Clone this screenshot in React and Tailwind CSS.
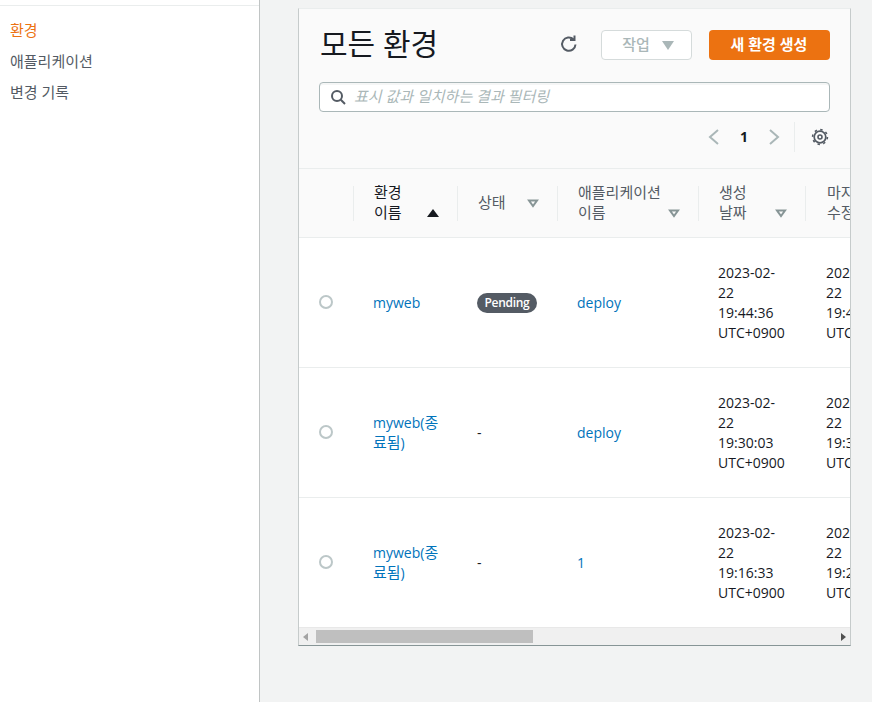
const FONT = "font-['Open_Sans','Noto_Sans_CJK_KR',sans-serif]";

const COLS = ["w-[54px]", "w-[104px]", "w-[100px]", "w-[141px]", "w-[107px]", "w-[108px]"];

function Caret({ active }) {
  return (
    <svg width="12" height="10" viewBox="0 0 12 10" className="shrink-0">
      {active ? (
        <path d="M0 9 L6 1 L12 9 Z" fill="#16191f" />
      ) : (
        <path d="M2 2.5 H10 L6 8 Z" fill="none" stroke="#879596" strokeWidth="2" />
      )}
    </svg>
  );
}

function HeadCell({ w, lines, active, center, pl = "pl-5" }) {
  return (
    <div className={`${w} shrink-0 h-[35px] border-l border-[#eaeded] ${pl} pr-[18px] flex justify-between items-center`}>
      <div className={`leading-5 text-[15px] whitespace-nowrap mb-1 ${active ? "text-[#16191f]" : "text-[#545b64]"}`}>
        {lines.map((l) => (
          <div key={l}>{l}</div>
        ))}
      </div>
      <div className={center ? "mb-px" : "mt-[18px]"}>
        <Caret active={active} />
      </div>
    </div>
  );
}

function Row({ name, status, app, created, updated, last }) {
  return (
    <div className={`flex h-[130px] items-center ${last ? "" : "border-b border-[#eaeded]"}`}>
      <div className={`${COLS[0]} shrink-0 pl-5`}>
        <div className="w-3.5 h-3.5 rounded-full border-2 border-[#bcc7c8] bg-white mt-[-2px]" />
      </div>
      <div className={`${COLS[1]} shrink-0 pl-5 pr-4 leading-5 text-[#0073bb] break-all`}>{name}</div>
      <div className={`${COLS[2]} shrink-0 pl-5`}>{status}</div>
      <div className={`${COLS[3]} shrink-0 pl-5 text-[#0073bb]`}>{app}</div>
      <div className={`${COLS[4]} shrink-0 pl-5 pr-[14px] leading-5 text-[#16191f]`}>{created}</div>
      <div className={`${COLS[5]} shrink-0 pl-[21px] pr-[13px] leading-5 text-[#16191f]`}>{updated}</div>
    </div>
  );
}

const Terminated = () => (
  <>
    myweb(<span className="text-[15px] leading-none">종료됨</span>)
  </>
);

export default function App() {
  return (
    <div className={`${FONT} flex h-[702px] w-[872px] overflow-hidden bg-[#f2f3f3] text-sm text-[#16191f]`}>
      <aside className="w-[260px] shrink-0 bg-white border-r border-[#c0c4c4]">
        <div className="h-[6px] border-b border-[#eaeded]" />
        <nav className="pl-[10px] pt-[14px] flex flex-col gap-[11px] leading-5 text-[15px] text-[#545b64]">
          <div className="text-[#ec7211]">환경</div>
          <div>애플리케이션</div>
          <div>변경 기록</div>
        </nav>
      </aside>

      <main className="pl-[38px] pt-2">
        <section className="w-[553px] h-[638px] bg-white border-l border-r border-[#c6cbcb] border-t-[#eaeded] border-t border-b border-b-[#879596] flex flex-col overflow-hidden">
          <header className="bg-[#fafafa] h-[160px] shrink-0 px-5 border-b border-[#eaeded]">
            <div className="flex items-center h-[72px]">
              <h1 className="text-[30px] font-normal leading-9 flex-1 mt-[-2px] ml-px">모든 환경</h1>
              <svg width="20" height="20" viewBox="0 0 20 20" fill="none" stroke="#545b64" strokeWidth="2" className="mr-[22px] mt-[-2px]">
                <path d="M16.5 10.5a6.7 6.7 0 1 1-2-5.2" />
                <path d="M15.5 1.5v4.5H11" strokeLinejoin="miter" />
              </svg>
              <button className="w-[91px] h-[30px] mr-[17px] rounded-sm border border-[#d5dbdb] bg-white text-[15px] text-[#aab7b8] font-medium flex items-center justify-center gap-3 pl-[3px]">
                작업
                <svg width="12" height="9" viewBox="0 0 12 9"><path d="M0 0 H12 L6 9 Z" fill="#aab7b8" /></svg>
              </button>
              <button className="w-[121px] h-[30px] rounded-sm bg-[#ec7211] text-white font-bold text-[15px] pr-px">새 환경 생성</button>
            </div>
            <div className="h-[30px] w-[511px] mt-px flex items-center rounded-sm border border-[#aab7b8] bg-white pl-[10px] shadow-[inset_0_2px_0_#f5f6f6]">
              <svg width="16" height="16" viewBox="0 0 16 16" fill="none" stroke="#545b64" strokeWidth="2">
                <circle cx="7" cy="7" r="5" />
                <path d="M10.8 10.8 L15 15" />
              </svg>
              <span className="ml-[8px] mb-[2px] italic text-[15px] leading-5 text-[#aab7b8]">표시 값과 일치하는 결과 필터링</span>
            </div>
            <div className="flex items-center justify-end h-[30px] mt-[10px]">
              <svg width="12" height="18" viewBox="0 0 12 18" fill="none" stroke="#aab7b8" strokeWidth="2"><path d="M10 2 L2 9 L10 16" /></svg>
              <span className="w-[48px] text-center font-bold text-[#16191f]">1</span>
              <svg width="12" height="18" viewBox="0 0 12 18" fill="none" stroke="#aab7b8" strokeWidth="2"><path d="M2 2 L10 9 L2 16" /></svg>
              <div className="w-px h-[30px] bg-[#eaeded] ml-[14px] mr-4" />
              <svg width="18" height="18" viewBox="0 0 18 18" fill="none" stroke="#545b64" className="mr-px">
                <circle cx="9" cy="9" r="2" strokeWidth="1.6" />
                <circle cx="9" cy="9" r="5.8" strokeWidth="1.7" />
                <circle cx="9" cy="9" r="7.4" strokeWidth="1.6" strokeDasharray="2.4 3.41" />
              </svg>
            </div>
          </header>

          <div className="flex-1 overflow-hidden">
            <div className="w-[700px]">
              <div className="flex items-center h-[69px] bg-[#fafafa] border-b border-[#eaeded] pt-px">
                <div className={`${COLS[0]} shrink-0`} />
                <HeadCell w={COLS[1]} lines={["환경", "이름"]} active />
                <HeadCell w={COLS[2]} lines={["상태"]} center />
                <HeadCell w={COLS[3]} lines={["애플리케이션", "이름"]} />
                <HeadCell w={COLS[4]} lines={["생성", "날짜"]} />
                <HeadCell w={COLS[5]} lines={["마지막", "수정"]} pl="pl-[21px]" />
              </div>
              <Row
                name="myweb"
                status={<span className="inline-block w-[60px] text-center h-5 rounded-full bg-[#545b64] text-white text-xs font-semibold leading-5 tracking-[-0.3px]">Pending</span>}
                app="deploy"
                created={<>2023-02-<br />22<br />19:44:36<br />UTC+0900</>}
                updated={<>2023-02-<br />22<br />19:44:36<br />UTC+0900</>}
              />
              <Row
                name={<Terminated />}
                status="-"
                app="deploy"
                created={<>2023-02-<br />22<br />19:30:03<br />UTC+0900</>}
                updated={<>2023-02-<br />22<br />19:30:03<br />UTC+0900</>}
              />
              <Row
                name={<Terminated />}
                status="-"
                app="1"
                created={<>2023-02-<br />22<br />19:16:33<br />UTC+0900</>}
                updated={<>2023-02-<br />22<br />19:25:33<br />UTC+0900</>}
                last
              />
            </div>
          </div>

          <div className="h-[18px] shrink-0 bg-[#f0f0f0] border-t border-[#e8e8e8] flex items-center justify-between px-[4px]">
            <svg width="5" height="8" viewBox="0 0 5 8"><path d="M5 0 V8 L0 4 Z" fill="#a3a3a3" /></svg>
            <div className="w-[217px] h-[13px] bg-[#bfbfbf] ml-[8px] mr-auto" />
            <svg width="5" height="8" viewBox="0 0 5 8"><path d="M0 0 V8 L5 4 Z" fill="#505050" /></svg>
          </div>
        </section>
      </main>
    </div>
  );
}
